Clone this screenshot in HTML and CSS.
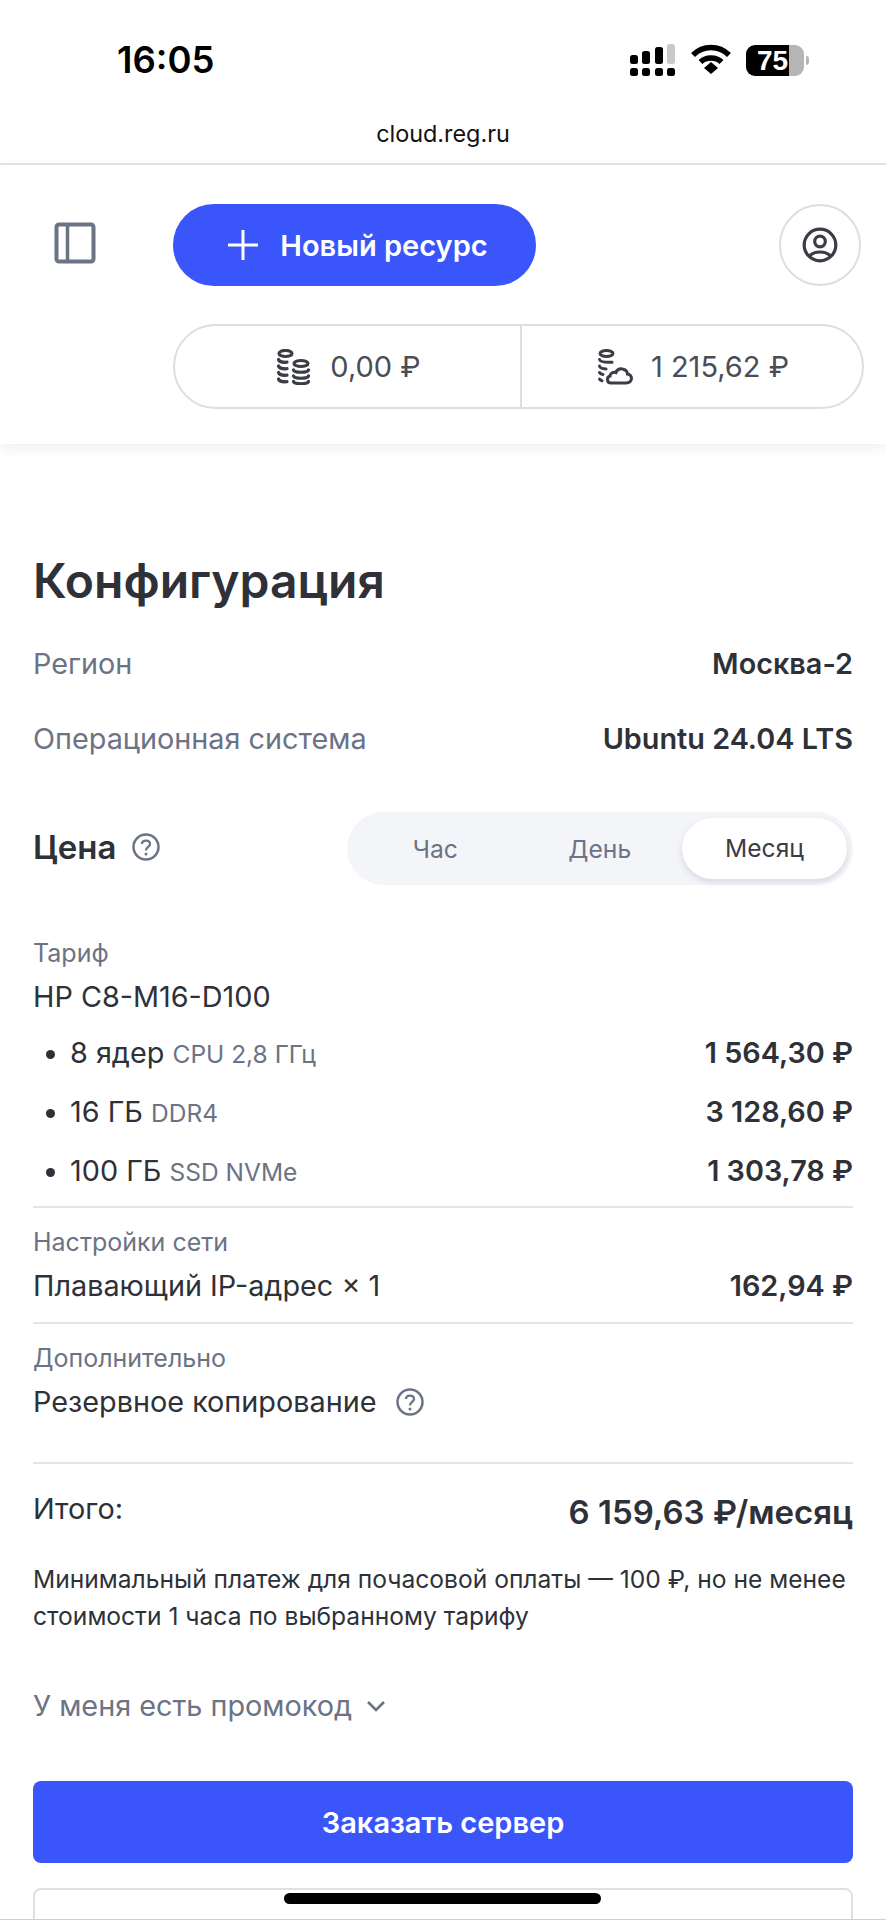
FILE: index.html
```html
<!DOCTYPE html>
<html lang="ru">
  <head>
    <meta charset="UTF-8" />
    <meta name="viewport" content="width=device-width, initial-scale=1.0" />
    <title>Конфигурация</title>
    <link rel="stylesheet" href="styles.css">
  </head>
  <body>
    <div class="status-bar">
      <span class="clock">16:05</span>
      <div class="status-icons">
        <svg width="46" height="32" viewBox="0 0 46 32">
          <rect x="0" y="11" width="8" height="9" rx="2.5" fill="#000"/>
          <rect x="12" y="7" width="8" height="13" rx="2.5" fill="#000"/>
          <rect x="25" y="3" width="8" height="17" rx="2.5" fill="#000"/>
          <rect x="37" y="0" width="8" height="20" rx="2.5" fill="#c9c9c9"/>
          <rect x="0" y="24" width="8" height="8" rx="2.5" fill="#000"/>
          <rect x="12" y="24" width="8" height="8" rx="2.5" fill="#000"/>
          <rect x="25" y="24" width="8" height="8" rx="2.5" fill="#000"/>
          <rect x="37" y="24" width="8" height="8" rx="2.5" fill="#000"/>
        </svg>
        <svg class="wifi" width="40" height="30" viewBox="0 0 40 30">
          <path d="M2 11 C12 1 28 1 38 11" fill="none" stroke="#000" stroke-width="5.5"/>
          <path d="M9.5 18 C15 12.5 25 12.5 30.500 18" fill="none" stroke="#000" stroke-width="5.5"/>
          <path d="M13 24 L20 18 L27 24 L20 30 Z" fill="#000"/>
        </svg>
        <div class="battery">
          <div class="battery-body"><span>75</span></div>
          <div class="battery-cap"></div>
        </div>
      </div>
    </div>

    <div class="address-bar">cloud.reg.ru</div>

    <header class="top-panel">
      <div class="top-row">
        <svg class="sidebar-icon" width="42" height="42" viewBox="0 0 42 42">
          <rect x="2.500" y="2.500" width="37" height="37" rx="2.500" fill="none" stroke="#6b7385" stroke-width="4"/>
          <path d="M13.500 3 V39" stroke="#6b7385" stroke-width="3.500"/>
        </svg>
        <button class="new-button" type="button">
          <svg width="32" height="32" viewBox="0 0 32 32">
            <path d="M16 1 V31 M1 16 H31" stroke="#fff" stroke-width="3"/>
          </svg>
          Новый ресурс
        </button>
        <button class="profile-button" type="button">
          <svg width="36" height="36" viewBox="0 0 36 36" fill="none" stroke="#3a3d45" stroke-width="3.200">
            <circle cx="18" cy="18" r="15.800"/>
            <circle cx="18" cy="14.500" r="5.300"/>
            <path d="M7 29.500 C10 26 14 25 18 25 C22 25 26 26 29 29.500"/>
          </svg>
        </button>
      </div>
      <div class="balance">
        <div class="balance-part">
          <svg width="36" height="36" viewBox="0 0 36 36" fill="none" stroke="#3a3d45" stroke-width="3.200" stroke-linecap="round">
            <ellipse cx="9.500" cy="4.500" rx="6.500" ry="3"/>
            <path d="M2.500 10.500 C3 12.500 7 13.500 11 13.200 M2.500 17 C3 19 7 20 11 19.700 M2.500 23.500 C3 25.500 7 26.500 11 26.200 M2.500 30 C3 32 7 33 11 32.700"/>
            <ellipse cx="25" cy="14.500" rx="7" ry="3"/>
            <path d="M17.500 21 C18.500 24 31.500 24 32.500 21 M17.500 27 C18.500 30 31.500 30 32.500 27 M17.500 32.500 C18.500 35.500 31.500 35.500 32.500 32.500"/>
          </svg>
          <span>0,00 ₽</span>
        </div>
        <div class="balance-part">
          <svg width="36" height="36" viewBox="0 0 36 36" fill="none" stroke="#3a3d45" stroke-width="3" stroke-linecap="round">
            <ellipse cx="9.500" cy="4.500" rx="6.500" ry="3"/>
            <path d="M2.500 10.500 C3 12.500 7 13.500 15 13.200 M2.500 17 C3 19 5 19.800 9 19.900 M2.500 23.500 C3 24.500 4 25 6 25.500 M2.500 30 C3 31 4 31.500 5 31.800"/>
            <path d="M14 34 H29 C36 34 36 25.500 30.500 25 C30 19 21 18 19 23.500 C16 22.500 13 24.500 13 27 C9.500 28 9.500 34 14 34 Z"/>
          </svg>
          <span>1 215,62 ₽</span>
        </div>
      </div>
    </header>

    <main class="content">
      <h1>Конфигурация</h1>

      <div class="info-row first">
        <span class="muted">Регион</span>
        <strong>Москва-2</strong>
      </div>
      <div class="info-row">
        <span class="muted">Операционная система</span>
        <strong>Ubuntu 24.04 LTS</strong>
      </div>

      <div class="price-head">
        <div class="price-title">
          Цена
          <svg class="help" width="28" height="28" viewBox="0 0 28 28">
            <circle cx="14" cy="14" r="12.500" fill="none" stroke="#6b7385" stroke-width="2.500"/>
            <path d="M10 11 C10 6.500 18 6.500 18 11 C18 14 14 14 14 17.500" fill="none" stroke="#6b7385" stroke-width="2.300"/>
            <circle cx="14" cy="21" r="1.500" fill="#6b7385"/>
          </svg>
        </div>
        <div class="period">
          <span>Час</span>
          <span>День</span>
          <span class="active">Месяц</span>
        </div>
      </div>

      <section class="group tariff">
        <div class="group-label">Тариф</div>
        <div class="group-name">HP C8-M16-D100</div>
        <ul class="specs">
          <li><span>8 ядер <small>CPU 2,8 ГГц</small></span><strong>1 564,30 ₽</strong></li>
          <li><span>16 ГБ <small>DDR4</small></span><strong>3 128,60 ₽</strong></li>
          <li><span>100 ГБ <small>SSD NVMe</small></span><strong>1 303,78 ₽</strong></li>
        </ul>
      </section>

      <section class="group network">
        <div class="group-label">Настройки сети</div>
        <div class="group-line">
          <span>Плавающий IP-адрес × 1</span>
          <strong>162,94 ₽</strong>
        </div>
      </section>

      <section class="group extra">
        <div class="group-label">Дополнительно</div>
        <div class="group-name with-help">
          Резервное копирование
          <svg class="help" width="28" height="28" viewBox="0 0 28 28">
            <circle cx="14" cy="14" r="12.500" fill="none" stroke="#6b7385" stroke-width="2.500"/>
            <path d="M10 11 C10 6.500 18 6.500 18 11 C18 14 14 14 14 17.500" fill="none" stroke="#6b7385" stroke-width="2.300"/>
            <circle cx="14" cy="21" r="1.500" fill="#6b7385"/>
          </svg>
        </div>
      </section>

      <section class="total">
        <span>Итого:</span>
        <strong>6 159,63 ₽/месяц</strong>
      </section>

      <p class="notice">Минимальный платеж для почасовой оплаты — 100 ₽, но не менее стоимости 1 часа по выбранному тарифу</p>

      <div class="promo">
        У меня есть промокод
        <svg width="20" height="12" viewBox="0 0 20 12">
          <path d="M2 2 L10 10 L18 2" fill="none" stroke="#6b7385" stroke-width="2.600"/>
        </svg>
      </div>

      <button class="order-button" type="button">Заказать сервер</button>
      <div class="second-button"><i class="cut-dot"></i></div>
    </main>

    <div class="home-bar"></div>
  </body>
</html>
```

FILE: styles.css
```css
html, body {
  margin: 0;
  padding: 0;
}
body {
  position: relative;
  width: 886px;
  height: 1920px;
  overflow: hidden;
  background: #fff;
  font-family: Inter, "Noto Sans", sans-serif;
  color: #2e3138;
}
button {
  font-family: inherit;
  cursor: pointer;
}
svg {
  display: block;
  flex: none;
}

/* phone chrome */
.status-bar {
  height: 118px;
  box-sizing: border-box;
  padding: 38px 77px 0 117px;
  display: flex;
  justify-content: space-between;
  align-items: flex-start;
}
.clock {
  font-size: 36.500px;
  line-height: 44px;
  font-weight: 600;
  color: #000;
}
.status-icons {
  display: flex;
  align-items: center;
  gap: 15px;
  margin-top: 6px;
}
.wifi {
  margin-top: -2px;
}
.battery {
  display: flex;
  align-items: center;
  gap: 2px;
}
.battery-body {
  width: 58px;
  height: 31px;
  border-radius: 9px;
  background: linear-gradient(90deg, #000 0, #000 75%, #b5b5b5 75%);
  color: #fff;
  font-family: "Liberation Sans", sans-serif;
  font-size: 28px;
  font-weight: 700;
  line-height: 31px;
  text-indent: 11px;
  overflow: hidden;
}
.battery-cap {
  width: 3px;
  height: 9px;
  border-radius: 0 3px 3px 0;
  background: #b5b5b5;
}
.address-bar {
  height: 45px;
  border-bottom: 2px solid #e4e5e8;
  text-align: center;
  font-size: 23.400px;
  line-height: 32px;
  color: #111;
}

/* top panel */
.top-panel {
  height: 279px;
  box-sizing: border-box;
  padding: 39px 22px 0 54px;
  background: #fff;
  box-shadow: 0 4px 12px rgba(40, 50, 80, 0.08);
}
.top-row {
  display: flex;
  align-items: center;
}
.sidebar-icon {
  margin-bottom: 4px;
}
.new-button {
  margin-left: 77px;
  width: 363px;
  height: 82px;
  padding: 0 0 0 6px;
  border: none;
  border-radius: 41px;
  background: #3a56fa;
  color: #fff;
  font-size: 29px;
  font-weight: 600;
  display: flex;
  align-items: center;
  justify-content: center;
  gap: 21px;
}
.profile-button {
  margin-left: auto;
  margin-right: 3px;
  width: 82px;
  height: 82px;
  padding: 0;
  border: 2px solid #dcdee2;
  border-radius: 50%;
  background: #fff;
  display: flex;
  align-items: center;
  justify-content: center;
}
.balance {
  margin: 38px 0 0 119px;
  height: 85px;
  border: 2px solid #dcdee2;
  border-radius: 43px;
  box-sizing: border-box;
  display: flex;
  font-size: 29px;
  color: #4a4d55;
}
.balance-part {
  display: flex;
  align-items: center;
  justify-content: center;
  gap: 18px;
  padding-left: 2px;
}
.balance-part:first-child {
  width: 343px;
  border-right: 2px solid #dcdee2;
}
.balance-part:last-child {
  flex: 1;
}

/* configuration */
.content {
  padding: 110px 33px 0;
}
h1 {
  margin: 0;
  font-size: 48px;
  line-height: 54px;
  font-weight: 600;
}
strong {
  font-weight: 600;
}
.muted {
  color: #6b7385;
}
.info-row {
  display: flex;
  justify-content: space-between;
  font-size: 28.800px;
  line-height: 36px;
  margin-top: 39px;
}
.info-row.first {
  margin-top: 38px;
}
.price-head {
  margin-top: 55px;
  display: flex;
  justify-content: space-between;
  align-items: center;
}
.price-title {
  display: flex;
  align-items: center;
  gap: 16px;
  padding-bottom: 3px;
  font-size: 33px;
  font-weight: 600;
}
.period {
  width: 506px;
  height: 73px;
  box-sizing: border-box;
  padding: 6px;
  border-radius: 37px;
  background: #f3f5f8;
  display: grid;
  grid-template-columns: 1fr 1fr 165px;
  align-items: center;
  text-align: center;
  font-size: 24.600px;
  color: #6b7385;
}
.period .active {
  height: 61px;
  line-height: 61px;
  border-radius: 31px;
  background: #fff;
  color: #3a3d45;
  box-shadow: 0 3px 6px rgba(60, 70, 110, 0.16);
}

/* price breakdown */
.group {
  border-bottom: 2px solid #e3e5e8;
}
.group-label {
  font-size: 25px;
  line-height: 30px;
  color: #6b7385;
}
.group-name,
.group-line {
  font-size: 28.800px;
  line-height: 36px;
  margin-top: 11px;
}
.group-line {
  display: flex;
  justify-content: space-between;
}
.tariff {
  margin-top: 53px;
  padding-bottom: 5px;
}
.network {
  padding-top: 19px;
  padding-bottom: 18px;
}
.extra {
  padding-top: 19px;
  padding-bottom: 42px;
}
.with-help {
  display: flex;
  align-items: center;
  gap: 19px;
}
.specs {
  list-style: none;
  margin: 9px 0 0;
  padding: 0;
}
.specs li {
  display: flex;
  justify-content: space-between;
  font-size: 28.800px;
  line-height: 57px;
  padding-left: 37px;
  position: relative;
}
.specs li::before {
  content: "";
  position: absolute;
  left: 13px;
  top: 26px;
  width: 9px;
  height: 9px;
  border-radius: 50%;
  background: #2e3138;
}
small {
  font-size: 24.500px;
  color: #6b7385;
}
.total {
  margin-top: 28px;
  display: flex;
  justify-content: space-between;
  align-items: flex-start;
  font-size: 28.800px;
  line-height: 40px;
}
.total span {
  margin-top: -3px;
}
.total strong {
  font-size: 33px;
}
.notice {
  margin: 29px 0 0;
  font-size: 24.600px;
  line-height: 37px;
}
.promo {
  margin-top: 53px;
  display: flex;
  align-items: center;
  gap: 14px;
  font-size: 28.800px;
  line-height: 36px;
  color: #6b7385;
}
.order-button {
  display: block;
  margin-top: 57px;
  width: 100%;
  height: 82px;
  border: none;
  border-radius: 8px;
  background: #3a56fa;
  color: #fff;
  font-size: 29px;
  font-weight: 600;
}
.second-button {
  margin-top: 25px;
  height: 90px;
  border: 2px solid #dfe1e5;
  border-radius: 8px;
  box-sizing: border-box;
  display: flex;
  justify-content: center;
  padding-top: 29px;
}
.cut-dot {
  width: 13px;
  height: 13px;
  border-radius: 50%;
  background: #2e3138;
  margin-right: 121px;
}
.home-bar {
  position: absolute;
  left: 284px;
  top: 1893px;
  width: 317px;
  height: 11px;
  border-radius: 6px;
  background: #000;
}
/* grey line at the very bottom of the shot */
body::after {
  content: "";
  position: absolute;
  left: 0;
  right: 0;
  bottom: 0;
  height: 1px;
  background: #d0d0d0;
}
```
